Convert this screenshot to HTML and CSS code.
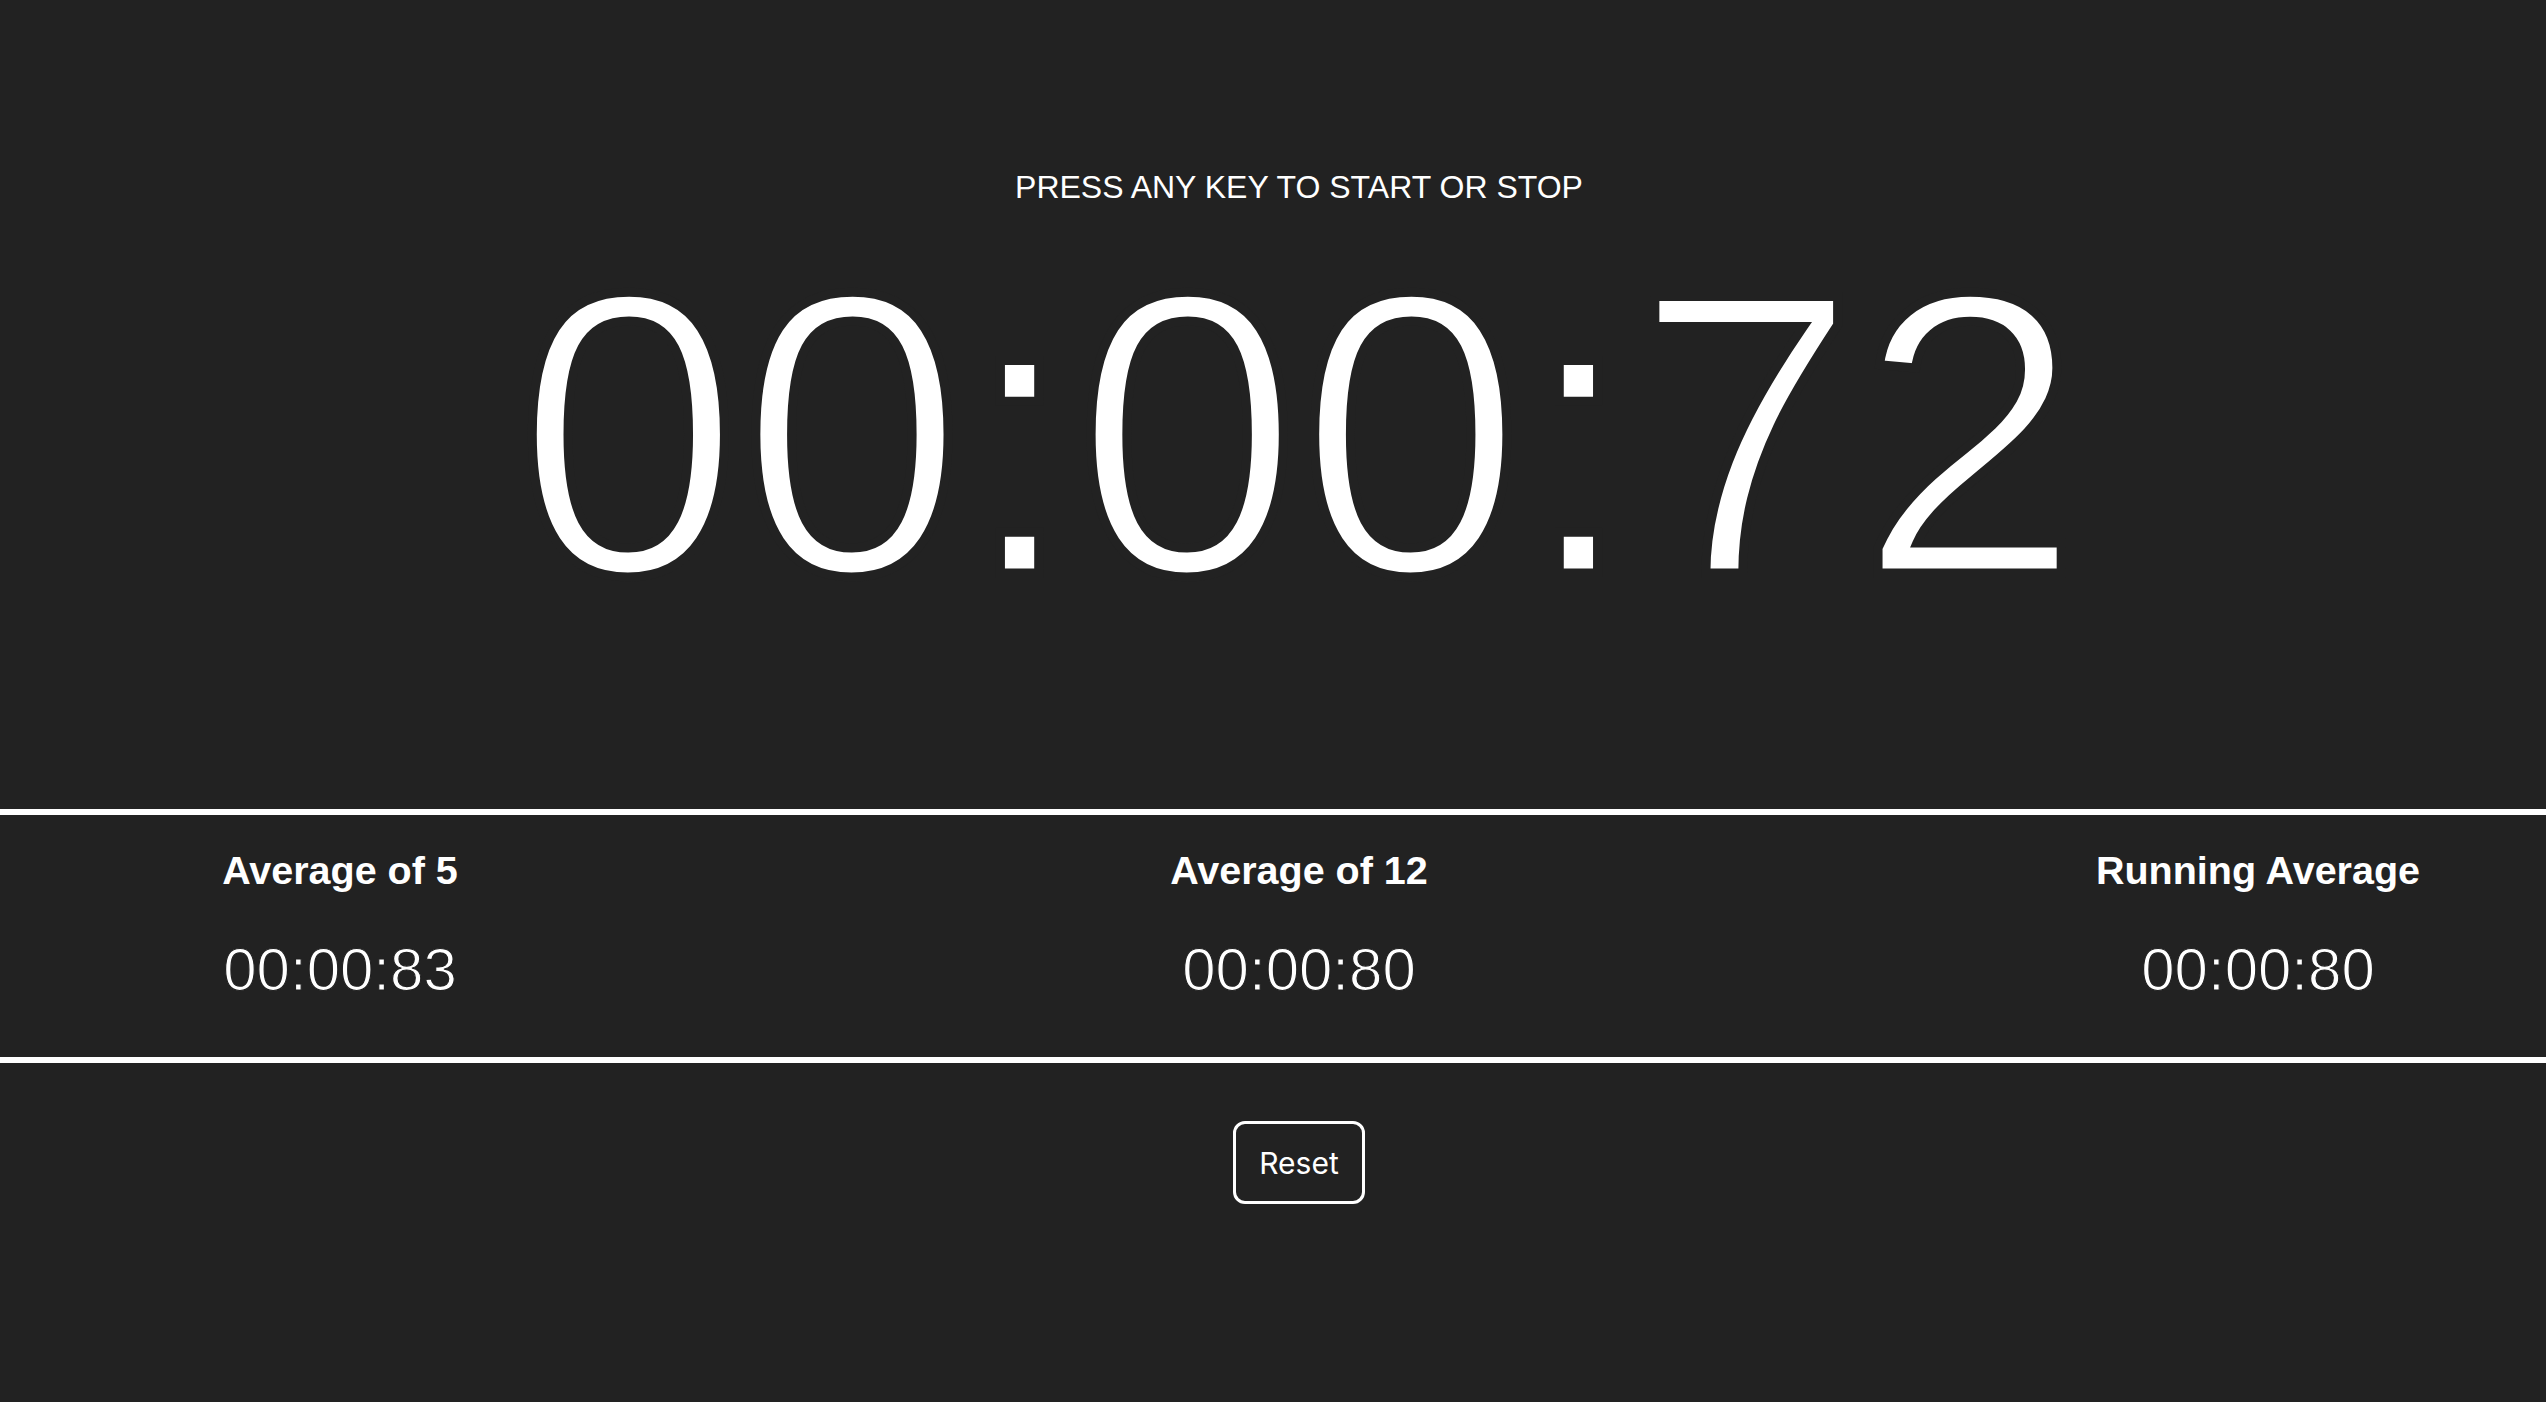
FILE: index.html
```html
<!DOCTYPE html>
<html lang="en">
<head>
<meta charset="utf-8">
<title>Stopwatch</title>
<link rel="stylesheet" href="styles.css">
</head>
<body>
<div class="app">
  <header class="head">
    <p class="hint">PRESS ANY KEY TO START OR STOP</p>
    <div class="timer">00:00:72</div>
  </header>
  <section class="stats">
    <div class="stats-row">
      <div class="stat">
        <h3 class="stat-label">Average of 5</h3>
        <div class="stat-value">00:00:83</div>
      </div>
      <div class="stat">
        <h3 class="stat-label">Average of 12</h3>
        <div class="stat-value">00:00:80</div>
      </div>
      <div class="stat">
        <h3 class="stat-label">Running Average</h3>
        <div class="stat-value">00:00:80</div>
      </div>
    </div>
  </section>
  <footer class="foot">
    <button class="reset" type="button">Reset</button>
  </footer>
</div>
</body>
</html>
```

FILE: styles.css
```css
html, body {
  margin: 0;
  padding: 0;
}

body {
  background: #222222;
  color: #ffffff;
  font-family: "Liberation Sans", Arial, Helvetica, sans-serif;
  height: 1402px;
  overflow: hidden;
}

.app {
  padding-top: 171px;
}

.head {
  padding-left: 52px;
  text-align: center;
}

.hint {
  margin: 0;
  font-size: 32px;
  line-height: 1;
  font-weight: 400;
}

.timer {
  margin-top: 30px;
  font-size: 402px;
  line-height: 1;
  height: 401px;
  font-weight: 400;
  -webkit-text-stroke: 9px #222222;
}

.stats {
  margin-top: 175px;
  border-top: 6px solid #ffffff;
  border-bottom: 6px solid #ffffff;
  padding: 36px 0 58px;
  overflow: hidden;
}

.stats-row {
  display: flex;
  justify-content: center;
  padding-left: 52px;
}

.stat {
  flex: 0 0 959px;
  text-align: center;
}

.stat-label {
  margin: 0;
  font-size: 39.5px;
  line-height: 1;
  font-weight: 700;
}

.stat-value {
  margin-top: 49px;
  font-size: 60px;
  line-height: 1;
  height: 59px;
  -webkit-text-stroke: 1.2px #222222;
}

.foot {
  padding-left: 52px;
  padding-top: 58px;
  display: flex;
  justify-content: center;
}

.reset {
  background: transparent;
  color: #ffffff;
  border: 3px solid #ffffff;
  border-radius: 12px;
  font-family: Inter, "Noto Sans", sans-serif;
  font-size: 30px;
  line-height: 1;
  padding: 24px 0 23px;
  width: 132px;
  cursor: pointer;
}
```
